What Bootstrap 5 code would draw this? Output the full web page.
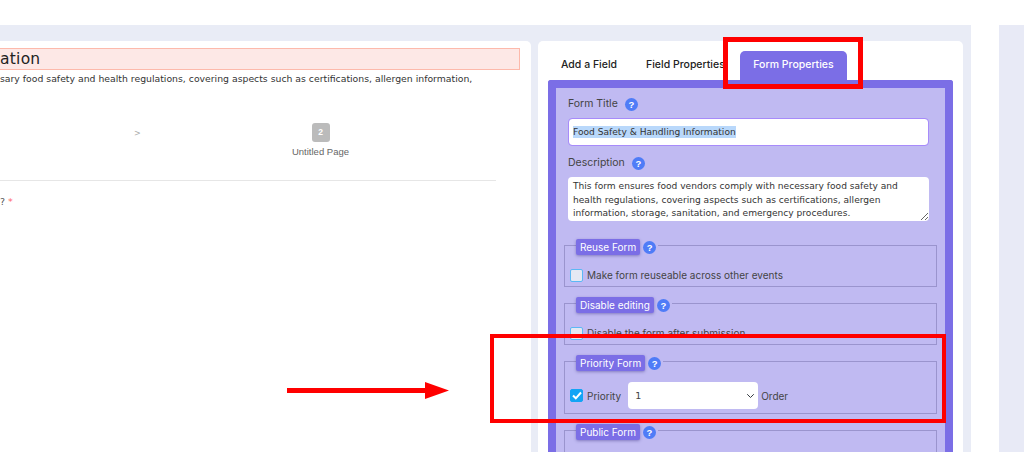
<!doctype html>
<html lang="en">
<head>
<meta charset="utf-8">
<title>Form Properties</title>
<link rel="stylesheet" href="https://cdn.jsdelivr.net/npm/bootstrap@5.3.0/dist/css/bootstrap.min.css">
<style>
html,body{height:452px;overflow:hidden;background:#fff}
body{font-family:"Inter","Liberation Sans",sans-serif;position:relative}
.page-top{height:25px}
.page-shell{height:427px;overflow:hidden}
.work-band{width:971px;background:#e9ecf6;padding:16px 8px 0 0;gap:7px}
.side-band{width:25px;margin-left:28px;background:#e8eaf6}
.left-sheet{width:531px;height:420px;background:#fff;border-radius:0 5px 0 0;padding-top:7px;overflow:hidden;font-family:"DejaVu Sans",sans-serif}
.title-strip{width:520px;height:22px;background:#fde8e6;border:1px solid #fdb9ab;border-left:0;font-size:15.5px;line-height:20px;color:#222;letter-spacing:.25px}
.desc-line{font-size:9.3px;line-height:12px;margin-top:3px;color:#333;white-space:nowrap}
.step-row{height:48px;margin-top:38px;position:relative}
.step-sep{position:absolute;left:134px;top:5px;font-size:8px;color:#aaa}
.step-item{position:absolute;left:274px;top:0;width:93px;text-align:center;font-family:"Liberation Sans",sans-serif;font-size:9.5px;color:#666}
.step-num{width:18px;height:19px;background:#bbb;color:#fff;border-radius:3px;font-size:8.5px;font-weight:700;line-height:19px;margin:0 auto 3px}
.rule-line{width:496px;border-top:1px solid #e6e6e6;margin-top:9px}
.question-end{font-size:9.5px;margin-top:14px;color:#555}
.question-end span{color:#f66}
.right-sheet{width:425px;height:420px;background:#fff;border-radius:5px 5px 0 0;padding:10px 10px 0;overflow:hidden}
.tab-row{height:29px}
.tab-link{font-size:10.5px;font-weight:500;color:#222;padding:0 0 0 13px;line-height:27px;white-space:nowrap}
.tab-first{width:85px}
.tab-second{width:107px}
.tab-on{width:107px;background:#7b6ee6;color:#fff;border-radius:5px 5px 0 0;text-align:center;padding:0;line-height:27px}
.purple-panel{width:405px;height:400px;background:#c0baf2;border:8px solid #7b6ee6;border-bottom:0;border-radius:3px 3px 0 0;padding:8px 8px 0 8px;font-size:10.5px;color:#444;overflow:hidden}
.field-label{font-size:10.5px;line-height:16px;padding-left:4px;gap:7px}
.help-dot{width:13px;height:13px;border-radius:50%;background:#4f7cf7;color:#fff;font-size:9.5px;font-weight:700;line-height:13px;text-align:center;flex:none;font-family:"Liberation Sans",sans-serif}
.title-input.form-control{margin:6px 0 9px 4px;width:361px;height:28px;border:1px solid #a78bfa;border-radius:4px;padding:0 4px;font:9.1px/12px "DejaVu Sans",sans-serif;color:#333;display:flex;align-items:center}
.title-input mark{background:#b9d8fb;color:#333;padding:0}
.desc-area.form-control{margin:6px 0 0 4px;width:361px;height:44px;min-height:0;border:0;border-radius:4px;padding:3px 5px;font:9.1px/13.5px "DejaVu Sans",sans-serif;color:#333;background:#fff}
.opt-box{position:relative;border:1px solid #9a94ce;height:42px;margin-bottom:16px}
.opt-first{margin-top:24px}
.opt-tall{height:53px}
.opt-head{position:absolute;left:11px;top:-7px;gap:3px;background:#c0baf2;padding-right:2px}
.opt-tag{background:#7b6ee6;color:#fff;font-size:10px;line-height:16px;padding:0 4px;border-radius:2px;box-shadow:0 1px 3px rgba(60,50,130,.45);white-space:nowrap}
.opt-line{position:absolute;left:5px;top:22px;gap:4px;white-space:nowrap;font-size:10px;line-height:14px}
.opt-tall .opt-line{top:20px;height:27px}
.tick-box{width:13px;height:13px;flex:none;background:#e5e8f3;border:1px solid #5cb8f5;border-radius:2px}
.tick-on{background:#12a4f5;border-color:#12a4f5;display:flex;align-items:center;justify-content:center}
.order-pick.form-select{width:130px;height:27px;margin:0 -1px 0 3px;border:0;border-radius:4px;padding:0 20px 0 7px;font:9.5px "DejaVu Sans",sans-serif;color:#444;background-position:right 3px center;background-size:9px 8px}
.mark-frame{position:absolute;border:5px solid #f00;pointer-events:none}
.frame-tab{left:723px;top:37px;width:140px;height:52px}
.frame-form{left:490px;top:334px;width:456px;height:89px;border-width:4px}
.mark-arrow{position:absolute;left:287px;top:382px;pointer-events:none}
</style>
</head>
<body>
<div class="page-top"></div>
<div class="page-shell d-flex">
  <div class="work-band d-flex">
    <div class="left-sheet">
      <div class="title-strip">ation</div>
      <div class="desc-line">sary food safety and health regulations, covering aspects such as certifications, allergen information,</div>
      <div class="step-row">
        <div class="step-sep">&gt;</div>
        <div class="step-item"><div class="step-num">2</div>Untitled Page</div>
      </div>
      <div class="rule-line"></div>
      <div class="question-end">? <span>*</span></div>
    </div>
    <div class="right-sheet">
      <div class="tab-row d-flex">
        <div class="tab-link tab-first">Add a Field</div>
        <div class="tab-link tab-second">Field Properties</div>
        <div class="tab-link tab-on">Form Properties</div>
      </div>
      <div class="purple-panel">
        <div class="field-label d-flex align-items-center">Form Title <span class="help-dot">?</span></div>
        <div class="title-input form-control"><mark>Food Safety &amp; Handling Information</mark></div>
        <div class="field-label d-flex align-items-center">Description <span class="help-dot">?</span></div>
        <textarea class="desc-area form-control" rows="3">This form ensures food vendors comply with necessary food safety and health regulations, covering aspects such as certifications, allergen information, storage, sanitation, and emergency procedures.</textarea>
        <div class="opt-box opt-first">
          <div class="opt-head d-flex align-items-center"><span class="opt-tag">Reuse Form</span><span class="help-dot">?</span></div>
          <div class="opt-line d-flex align-items-center"><span class="tick-box"></span>Make form reuseable across other events</div>
        </div>
        <div class="opt-box">
          <div class="opt-head d-flex align-items-center"><span class="opt-tag">Disable editing</span><span class="help-dot">?</span></div>
          <div class="opt-line d-flex align-items-center"><span class="tick-box"></span>Disable the form after submission</div>
        </div>
        <div class="opt-box opt-tall">
          <div class="opt-head d-flex align-items-center"><span class="opt-tag">Priority Form</span><span class="help-dot">?</span></div>
          <div class="opt-line d-flex align-items-center">
            <span class="tick-box tick-on"><svg width="10" height="9" viewBox="0 0 10 9"><path d="M1 4.5 3.8 7.3 9 1.5" fill="none" stroke="#fff" stroke-width="2"/></svg></span>
            Priority
            <select class="order-pick form-select"><option>1</option></select>
            Order
          </div>
        </div>
        <div class="opt-box">
          <div class="opt-head d-flex align-items-center"><span class="opt-tag">Public Form</span><span class="help-dot">?</span></div>
        </div>
      </div>
    </div>
  </div>
  <div class="side-band"></div>
</div>
<div class="mark-frame frame-tab"></div>
<div class="mark-frame frame-form"></div>
<svg class="mark-arrow" width="162" height="17" viewBox="0 0 162 17"><path d="M0 6h138V0l24 8.5-24 8.5v-6H0z" fill="#f00"/></svg>
<script src="https://cdn.jsdelivr.net/npm/bootstrap@5.3.0/dist/js/bootstrap.bundle.min.js"></script>
</body>
</html>
